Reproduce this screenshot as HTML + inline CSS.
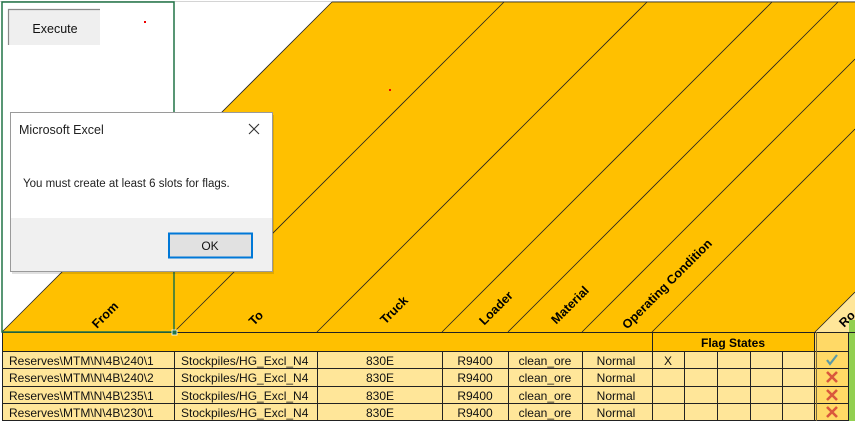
<!DOCTYPE html>
<html><head><meta charset="utf-8"><style>
html,body{margin:0;padding:0;width:855px;height:421px;overflow:hidden;background:#fff}
svg{display:block}
text{font-family:"Liberation Sans",sans-serif}
</style></head><body>
<svg width="855" height="421" viewBox="0 0 855 421" xmlns="http://www.w3.org/2000/svg">
<rect width="855" height="421" fill="#fff"/>
<line x1="0" y1="1.5" x2="855" y2="1.5" stroke="#d4d4d4"/>
<polygon points="2,332 332,2 855,2 855,332" fill="#FFC000"/>
<polygon points="815,332 855,292 855,332" fill="#FFE699"/>
<g stroke="#222" stroke-width="0.8">
<line x1="2" y1="332" x2="332" y2="2"/>
<line x1="174" y1="332" x2="504" y2="2"/>
<line x1="317" y1="332" x2="647" y2="2"/>
<line x1="442" y1="332" x2="772" y2="2"/>
<line x1="508" y1="332" x2="838" y2="2"/>
<line x1="582" y1="332" x2="855" y2="59"/>
<line x1="652" y1="332" x2="855" y2="129"/>
<line x1="815" y1="332" x2="855" y2="292"/>
<line x1="332" y1="2" x2="855" y2="2"/>
</g>
<g font-weight="bold" font-size="12.5" fill="#000" text-anchor="middle">
<text transform="translate(108,318) rotate(-45)">From</text>
<text transform="translate(259,321) rotate(-45)">To</text>
<text transform="translate(397,313) rotate(-45)">Truck</text>
<text transform="translate(499,311) rotate(-45)">Loader</text>
<text transform="translate(573,308) rotate(-45)">Material</text>
<text transform="translate(670,287) rotate(-45)">Operating Condition</text>
<text transform="translate(850,322) rotate(-45)">Ro</text>
</g>
<rect x="2" y="332" width="813" height="19" fill="#FFC000"/>
<rect x="815" y="332" width="34" height="89" fill="#FFD966"/>
<rect x="849" y="320" width="6" height="101" fill="#92D050"/>
<rect x="2" y="351" width="813" height="70" fill="#FFE699"/>
<g stroke="#222" stroke-width="1">
<line x1="2" y1="332.5" x2="855" y2="332.5"/>
<line x1="2" y1="351.5" x2="849" y2="351.5"/>
<line x1="2" y1="368.5" x2="849" y2="368.5"/>
<line x1="2" y1="386.5" x2="849" y2="386.5"/>
<line x1="2" y1="403.5" x2="849" y2="403.5"/>
<line x1="2" y1="420.5" x2="849" y2="420.5"/>
<line x1="2.5" y1="332" x2="2.5" y2="421"/>
<line x1="174.5" y1="351" x2="174.5" y2="421"/>
<line x1="317.5" y1="351" x2="317.5" y2="421"/>
<line x1="442.5" y1="351" x2="442.5" y2="421"/>
<line x1="508.5" y1="351" x2="508.5" y2="421"/>
<line x1="582.5" y1="351" x2="582.5" y2="421"/>
<line x1="652.5" y1="332" x2="652.5" y2="421"/>
<line x1="684.5" y1="351" x2="684.5" y2="421"/>
<line x1="717.5" y1="351" x2="717.5" y2="421"/>
<line x1="750.5" y1="351" x2="750.5" y2="421"/>
<line x1="782.5" y1="351" x2="782.5" y2="421"/>
<line x1="814.5" y1="332" x2="814.5" y2="421"/>
<line x1="816.5" y1="332" x2="816.5" y2="421" stroke="#7a6a40"/>
<line x1="848.5" y1="332" x2="848.5" y2="421"/>
</g>
<text x="733" y="347" font-size="12" font-weight="bold" text-anchor="middle">Flag States</text>
<g font-size="12" fill="#111">
<g>
<text x="9" y="365">Reserves\MTM\N\4B\240\1</text>
<text x="9" y="382">Reserves\MTM\N\4B\240\2</text>
<text x="9" y="400">Reserves\MTM\N\4B\235\1</text>
<text x="9" y="417">Reserves\MTM\N\4B\230\1</text>
<text x="181" y="365">Stockpiles/HG_Excl_N4</text>
<text x="181" y="382">Stockpiles/HG_Excl_N4</text>
<text x="181" y="400">Stockpiles/HG_Excl_N4</text>
<text x="181" y="417">Stockpiles/HG_Excl_N4</text>
</g>
<g text-anchor="middle">
<text x="380" y="365">830E</text><text x="380" y="382">830E</text><text x="380" y="400">830E</text><text x="380" y="417">830E</text>
<text x="475" y="365">R9400</text><text x="475" y="382">R9400</text><text x="475" y="400">R9400</text><text x="475" y="417">R9400</text>
<text x="545" y="365">clean_ore</text><text x="545" y="382">clean_ore</text><text x="545" y="400">clean_ore</text><text x="545" y="417">clean_ore</text>
<text x="616" y="365">Normal</text><text x="616" y="382">Normal</text><text x="616" y="400">Normal</text><text x="616" y="417">Normal</text>
<text x="668" y="365">X</text>
</g>
</g>
<path d="M827,360 L830,364 L837,355" stroke="#5a9aa8" stroke-width="2.2" fill="none"/>
<g stroke="#d9583c" stroke-width="2.6">
<path d="M827,372 L837,382 M837,372 L827,382"/>
<path d="M827,390 L837,400 M837,390 L827,400"/>
<path d="M827,407 L837,417 M837,407 L827,417"/>
</g>
<rect x="2" y="2" width="172" height="330" fill="none" stroke="#217346" stroke-width="1.5"/>
<rect x="172" y="330" width="5" height="5" fill="#217346" stroke="#fff" stroke-width="0.8"/>
<rect x="8" y="9" width="92" height="36" fill="#efefef"/>
<path d="M8.5,45 V9.5 H100" stroke="#8a8a8a" stroke-width="1.2" fill="none"/>
<text x="55" y="33" font-size="12.5" text-anchor="middle" fill="#111">Execute</text>
<rect x="144" y="21" width="2" height="2" fill="#e00"/>
<rect x="389" y="89" width="2" height="2" fill="#e00"/>
<rect x="12" y="115" width="262" height="159" fill="#000" opacity="0.12"/>
<rect x="10.5" y="112.5" width="262" height="159" fill="#fff" stroke="#9a9a9a"/>
<rect x="11" y="218" width="261" height="53" fill="#f0f0f0"/>
<text x="19" y="134" font-size="12.5" fill="#222">Microsoft Excel</text>
<path d="M249,124 L259,134 M259,124 L249,134" stroke="#333" stroke-width="1.1"/>
<text x="23" y="187" font-size="11.5" fill="#222">You must create at least 6 slots for flags.</text>
<rect x="169" y="233.5" width="83" height="24" fill="#e1e1e1" stroke="#0078d7" stroke-width="2"/>
<text x="210" y="250" font-size="12" text-anchor="middle" fill="#111">OK</text>
</svg>
</body></html>
